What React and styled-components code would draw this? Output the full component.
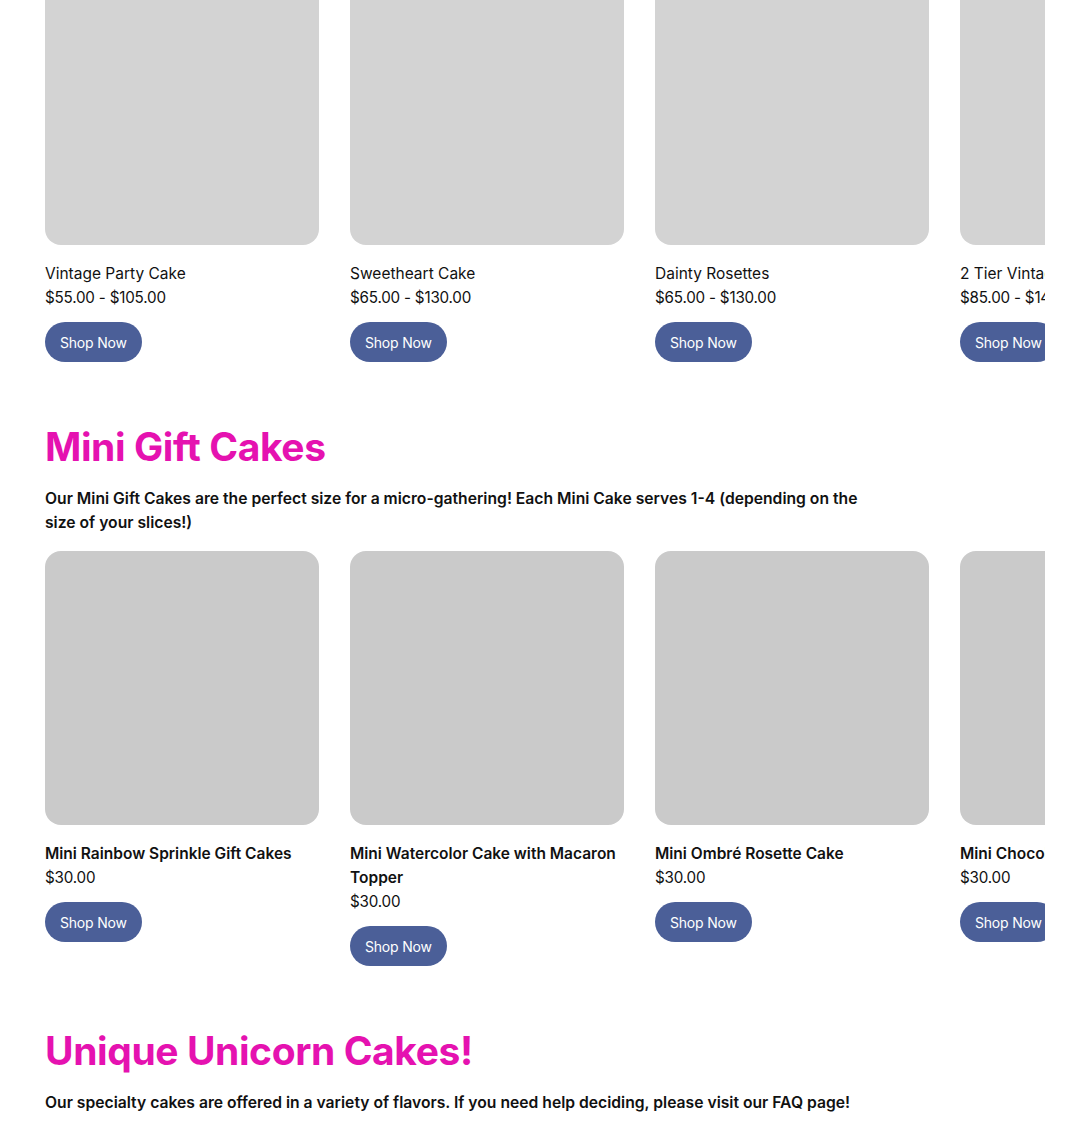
import React from "react";
import styled, { createGlobalStyle } from "styled-components";

const GlobalStyle = createGlobalStyle`
  body {
    margin: 0;
    background: #fff;
    font-family: Inter, "Liberation Sans", sans-serif;
    color: #111;
  }
`;

const Page = styled.div`
  margin-top: -29px;
  padding: 0 45px;
`;

const Section = styled.section`
  margin-bottom: 61px;
`;

const Heading = styled.h2`
  margin: 0 0 16px;
  font-size: 39px;
  line-height: 48px;
  font-weight: 700;
  color: #e512b0;
  letter-spacing: -0.4px;
`;

const Intro = styled.p`
  margin: 0 0 16px;
  max-width: 830px;
  font-size: 15.7px;
  line-height: 24px;
  font-weight: 600;
`;

const Rail = styled.div`
  overflow: hidden;
`;

const Track = styled.div`
  display: flex;
  gap: 31px;
  align-items: flex-start;
  width: max-content;
`;

const Card = styled.div`
  width: 274px;
  display: flex;
  flex-direction: column;
  align-items: flex-start;
`;

const Photo = styled.div`
  width: 274px;
  height: 274px;
  border-radius: 16px;
  background: ${(p) => p.$tone};
  margin-bottom: 17px;
`;

const Title = styled.div`
  font-size: 15.5px;
  line-height: 24px;
  font-weight: ${(p) => (p.$bold ? 600 : 400)};
`;

const Price = styled.div`
  font-size: 15.2px;
  line-height: 24px;
  letter-spacing: -0.2px;
`;

const ShopButton = styled.a`
  margin-top: 12px;
  display: inline-flex;
  align-items: center;
  height: 40px;
  padding: 0 15px;
  border-radius: 20px;
  background: #4b5f98;
  color: #fff;
  font-size: 14px;
  text-decoration: none;
  letter-spacing: -0.2px;
`;

const party = [
  { name: "Vintage Party Cake", price: "$55.00 - $105.00" },
  { name: "Sweetheart Cake", price: "$65.00 - $130.00" },
  { name: "Dainty Rosettes", price: "$65.00 - $130.00" },
  { name: "2 Tier Vintage Cake", price: "$85.00 - $145.00" },
];

const minis = [
  { name: "Mini Rainbow Sprinkle Gift Cakes", price: "$30.00" },
  { name: "Mini Watercolor Cake with Macaron Topper", price: "$30.00" },
  { name: "Mini Ombré Rosette Cake", price: "$30.00" },
  { name: "Mini Chocolate Drip Cake", price: "$30.00" },
];

const Row = ({ items, tone, bold }) => (
  <Rail>
    <Track>
      {items.map((item) => (
        <Card key={item.name}>
          <Photo $tone={tone} />
          <Title $bold={bold}>{item.name}</Title>
          <Price>{item.price}</Price>
          <ShopButton href="#">Shop Now</ShopButton>
        </Card>
      ))}
    </Track>
  </Rail>
);

export default function App() {
  return (
    <>
      <GlobalStyle />
      <Page>
        <Section>
          <Row items={party} tone="#d3d3d3" />
        </Section>
        <Section>
          <Heading>Mini Gift Cakes</Heading>
          <Intro>
            Our Mini Gift Cakes are the perfect size for a micro-gathering! Each
            Mini Cake serves 1-4 (depending on the size of your slices!)
          </Intro>
          <Row items={minis} tone="#cacaca" bold />
        </Section>
        <Section>
          <Heading>Unique Unicorn Cakes!</Heading>
          <Intro>
            Our specialty cakes are offered in a variety of flavors. If you need
            help deciding, please visit our FAQ page!
          </Intro>
        </Section>
      </Page>
    </>
  );
}
